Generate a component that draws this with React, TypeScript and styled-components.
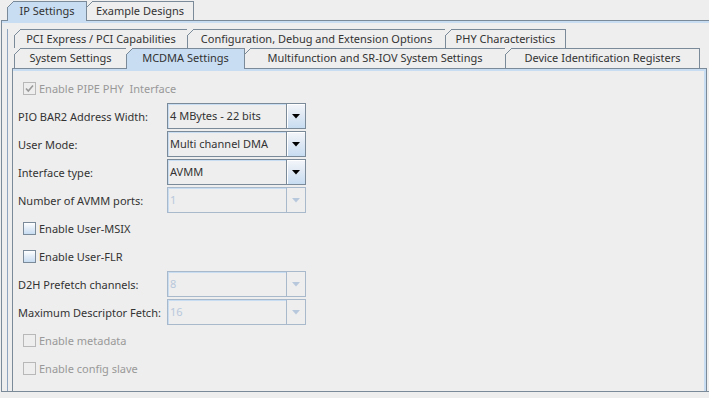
import React from "react";
import styled, { createGlobalStyle } from "styled-components";

const BORDER = "#7a8a99";
const SEL = "#c8ddf2";
const BG = "#eeeeee";

const Global = createGlobalStyle`
  html, body { margin: 0; padding: 0; background: ${BG}; }
  body {
    font-family: "Noto Sans", "DejaVu Sans", sans-serif;
    font-size: 11px;
    color: #333333;
    overflow: hidden;
  }
`;

const Window = styled.div`
  width: 709px;
  height: 398px;
  overflow: hidden;
  background: ${BG};
  display: flex;
  flex-direction: column;
`;

const TabStrip = styled.div<{ $pad: number; $h: number }>`
  display: flex;
  align-items: flex-end;
  height: ${(p) => p.$h}px;
  padding-left: ${(p) => p.$pad}px;
  position: relative;
  z-index: 2;
`;

const Tab = styled.div<{ $w: number; $h: number; $sel?: boolean; $merge?: boolean }>`
  position: relative;
  box-sizing: border-box;
  flex: none;
  width: ${(p) => p.$w}px;
  height: ${(p) => p.$h + (p.$merge ? 1 : 0)}px;
  margin-bottom: ${(p) => (p.$merge ? -1 : 0)}px;
  margin-right: -1px;
  border: 1px solid ${BORDER};
  border-bottom: none;
  background: ${(p) => (p.$sel ? SEL : BG)};
  display: flex;
  align-items: center;
  justify-content: center;
  padding-bottom: ${(p) => (p.$merge ? 3 : 2)}px;
  white-space: nowrap;
  color: #333333;
  z-index: ${(p) => (p.$sel ? 3 : 1)};
  &::before {
    content: "";
    position: absolute;
    left: -1px;
    top: -1px;
    width: 7px;
    height: 7px;
    background: linear-gradient(
      to bottom right,
      ${BG} 0 calc(50% - 0.6px),
      ${BORDER} calc(50% - 0.6px) calc(50% + 0.6px),
      transparent calc(50% + 0.6px)
    );
  }
`;

const OuterContent = styled.div`
  flex: none;
  height: 372px;
  margin-left: 1px;
  width: 720px;
  box-sizing: border-box;
  border-top: 1px solid ${BORDER};
  border-left: 1px solid ${BORDER};
  border-bottom: 1px solid ${BORDER};
  box-shadow: inset 0 2px 0 ${SEL};
  padding: 8px 0 0 5px;
  display: flex;
  flex-direction: column;
  position: relative;
  z-index: 1;
`;

const InnerPane = styled.div`
  flex: 1;
  display: flex;
  flex-direction: column;
  border-left: 1px solid #8ea4bf;
  padding-left: 4px;
  width: 698px;
  box-sizing: border-box;
`;

const BackRow = styled(TabStrip)`
  z-index: 1;
`;

const InnerContent = styled.div`
  flex: 1;
  box-sizing: border-box;
  width: 695px;
  border: 1px solid ${BORDER};
  border-bottom: none;
  box-shadow: inset 0 2px 0 ${SEL}, inset -2px 0 0 ${SEL};
  padding: 5px 0 0 5px;
  position: relative;
  z-index: 1;
`;

const Form = styled.div`
  display: grid;
  grid-template-columns: 149px 139px;
  grid-auto-rows: 28px;
  align-items: center;
`;

const Label = styled.div`
  grid-column: 1;
  white-space: nowrap;
  color: #333333;
`;

const CheckRow = styled.label<{ $disabled?: boolean }>`
  grid-column: 1 / -1;
  display: flex;
  align-items: center;
  gap: 3px;
  padding-left: 5px;
  white-space: pre;
  color: ${(p) => (p.$disabled ? "#999999" : "#333333")};
`;

const Box = styled.span<{ $disabled?: boolean }>`
  box-sizing: border-box;
  width: 13px;
  height: 13px;
  flex: none;
  border: 1px solid ${(p) => (p.$disabled ? "#b8b8b8" : BORDER)};
  background: ${(p) =>
    p.$disabled ? BG : `linear-gradient(to bottom, #ffffff 0%, #e4edf7 45%, ${SEL} 100%)`};
  display: flex;
  align-items: center;
  justify-content: center;
`;

const Combo = styled.div<{ $disabled?: boolean }>`
  grid-column: 2;
  box-sizing: border-box;
  height: 26px;
  display: flex;
  border: 1px solid ${(p) => (p.$disabled ? "#a9b9cc" : BORDER)};
  background: ${BG};
`;

const ComboText = styled.div<{ $disabled?: boolean }>`
  flex: 1;
  display: flex;
  align-items: center;
  padding-left: 2px;
  padding-bottom: 1px;
  box-shadow: inset 1px 1px 0 ${SEL};
  color: ${(p) => (p.$disabled ? "#b8c8dc" : "#333333")};
  border-right: 1px solid ${(p) => (p.$disabled ? "#a9b9cc" : BORDER)};
`;

const ArrowBtn = styled.div<{ $disabled?: boolean }>`
  width: 18px;
  display: flex;
  align-items: center;
  justify-content: center;
  background: ${(p) =>
    p.$disabled ? BG : `linear-gradient(to bottom, #f4f7fb 0%, #e2eaf4 40%, ${SEL} 100%)`};
  box-shadow: ${(p) => (p.$disabled ? "none" : "inset 1px 1px 0 #ffffff")};
`;

const Arrow = ({ color }: { color: string }) => (
  <svg width="8" height="5" viewBox="0 0 8 5">
    <polygon points="0,0 8,0 4,4.5" fill={color} />
  </svg>
);

const Check = () => (
  <svg width="11" height="11" viewBox="0 0 11 11">
    <path d="M2 5.5 L4.3 8 L9 2.5" stroke="#9a9a9a" strokeWidth="1.6" fill="none" />
  </svg>
);

type ComboProps = { value: string; disabled?: boolean };
const ComboBox = ({ value, disabled }: ComboProps) => (
  <Combo $disabled={disabled}>
    <ComboText $disabled={disabled}>{value}</ComboText>
    <ArrowBtn $disabled={disabled}>
      <Arrow color={disabled ? "#b8c8dc" : "#000000"} />
    </ArrowBtn>
  </Combo>
);

type CheckProps = { text: string; disabled?: boolean; checked?: boolean };
const CheckBox = ({ text, disabled, checked }: CheckProps) => (
  <CheckRow $disabled={disabled}>
    <Box $disabled={disabled}>{checked && <Check />}</Box>
    <span>{text}</span>
  </CheckRow>
);

export default function App() {
  return (
    <Window>
      <Global />
      <TabStrip $pad={7} $h={20}>
        <Tab $w={80} $h={19} $sel $merge>
          IP Settings
        </Tab>
        <Tab $w={108} $h={19}>
          Example Designs
        </Tab>
      </TabStrip>
      <OuterContent>
        <InnerPane>
          <BackRow $pad={2} $h={19}>
            <Tab $w={174} $h={19}>PCI Express / PCI Capabilities</Tab>
            <Tab $w={259} $h={19}>Configuration, Debug and Extension Options</Tab>
            <Tab $w={121} $h={19}>PHY Characteristics</Tab>
          </BackRow>
          <TabStrip $pad={2} $h={20}>
            <Tab $w={113} $h={20}>System Settings</Tab>
            <Tab $w={119} $h={20} $sel $merge>
              MCDMA Settings
            </Tab>
            <Tab $w={262} $h={20}>Multifunction and SR-IOV System Settings</Tab>
            <Tab $w={195} $h={20}>Device Identification Registers</Tab>
          </TabStrip>
          <InnerContent>
            <Form>
              <CheckBox text="Enable PIPE PHY  Interface" disabled checked />
              <Label>PIO BAR2 Address Width:</Label>
              <ComboBox value="4 MBytes - 22 bits" />
              <Label>User Mode:</Label>
              <ComboBox value="Multi channel DMA" />
              <Label>Interface type:</Label>
              <ComboBox value="AVMM" />
              <Label>Number of AVMM ports:</Label>
              <ComboBox value="1" disabled />
              <CheckBox text="Enable User-MSIX" />
              <CheckBox text="Enable User-FLR" />
              <Label>D2H Prefetch channels:</Label>
              <ComboBox value="8" disabled />
              <Label>Maximum Descriptor Fetch:</Label>
              <ComboBox value="16" disabled />
              <CheckBox text="Enable metadata" disabled />
              <CheckBox text="Enable config slave" disabled />
            </Form>
          </InnerContent>
        </InnerPane>
      </OuterContent>
    </Window>
  );
}
